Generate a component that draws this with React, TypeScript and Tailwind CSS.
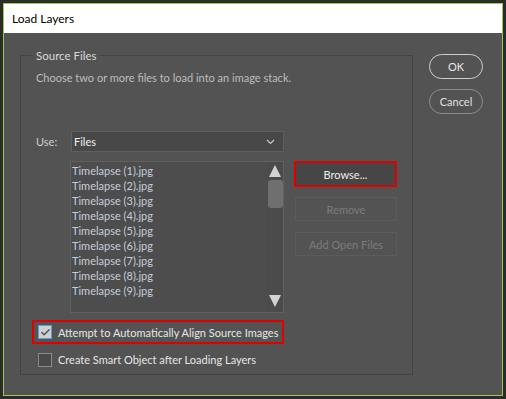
import { Check } from 'lucide-react';

const files = Array.from({ length: 9 }, (_, i) => `Timelapse (${i + 1}).jpg`);

export default function App() {
  return (
    <div
      className="w-[506px] h-[399px] bg-[#2b2b2b] p-[3px] text-[11px] leading-[15px]"
      style={{ fontFamily: 'Lato, "Noto Sans", sans-serif' }}
    >
      <div className="w-[500px] h-[393px] border border-[#9fc852] bg-[#535353] flex flex-col">
        {/* Title bar */}
        <div className="h-[29px] bg-white flex items-center pl-[8px] text-[12px] text-black shrink-0">
          Load Layers
        </div>

        {/* Body */}
        <div className="flex flex-1 pl-[16px] pt-[15px]">
          <fieldset className="w-[393px] h-[327px] border border-[#444444] pl-[15px]">
            <legend className="ml-[-3px] px-[3px] text-[#d8d8d8] text-[11.5px]">Source Files</legend>
            <p className="mt-[7px] text-[#bdbdbd]">Choose two or more files to load into an image stack.</p>

            {/* Use row */}
            <div className="flex items-center mt-[46px]">
              <span className="w-[35px] text-[#cfcfcf]">Use:</span>
              <div className="w-[213px] h-[21px] bg-[#484848] border border-[#5e5e5e] flex items-center justify-between pl-[2px] pr-[8px] text-[#f0f0f0]">
                <span>Files</span>
                <svg width="9" height="6" viewBox="0 0 9 6" fill="none" stroke="#c8c8c8" strokeWidth="1.2">
                  <path d="M1 1l3.5 3.5L8 1" />
                </svg>
              </div>
            </div>

            {/* List + buttons */}
            <div className="flex mt-[9px] ml-[34px]">
              <div className="w-[214px] h-[152px] border border-[#606060] bg-[#4d4d4d] flex">
                <div className="flex-1 pt-[1px] pl-[1px] overflow-hidden">
                  {files.map((f) => (
                    <div key={f} className="h-[15px] leading-[15px] text-[#c6cddc] whitespace-nowrap">
                      {f}
                    </div>
                  ))}
                </div>
                <div className="w-[16px] bg-[#4b4b4b] flex flex-col items-center">
                  <svg width="14" height="14" viewBox="0 0 14 14" className="mt-[2px]">
                    <path d="M7 1L13 13H1Z" fill="#d2d2d2" />
                  </svg>
                  <div className="w-[15px] h-[28px] mt-[2px] rounded-[3px] bg-[#6f6f6f]" />
                  <div className="flex-1" />
                  <svg width="14" height="14" viewBox="0 0 14 14" className="mb-[4px]">
                    <path d="M7 13L13 1H1Z" fill="#d2d2d2" />
                  </svg>
                </div>
              </div>

              <div className="flex flex-col ml-[10px] gap-[10px]">
                <div className="w-[103px] h-[26px] border-2 border-[#e00000] bg-[#464646] flex items-center justify-center text-[#ececec]">
                  Browse...
                </div>
                <div className="w-[102px] h-[24px] ml-[1px] border border-[#5c5c5c] flex items-center justify-center text-[#7c7c7c]">
                  Remove
                </div>
                <div className="w-[102px] h-[24px] ml-[1px] mt-[1px] border border-[#5c5c5c] flex items-center justify-center text-[#7c7c7c]">
                  Add Open Files
                </div>
              </div>
            </div>

            {/* Checkboxes */}
            <div className="mt-[7px] ml-[-4px] w-[252px] h-[24px] border-2 border-[#e00000] flex items-center pl-[4px]">
              <div className="w-[14px] h-[14px] border border-[#5b9be0] bg-[#cfcfcf] flex items-center justify-center shrink-0">
                <Check size={11} strokeWidth={3} color="#505050" />
              </div>
              <span className="ml-[6px] text-[#e6e6e6] whitespace-nowrap">Attempt to Automatically Align Source Images</span>
            </div>
            <div className="mt-[8px] flex items-center pl-[2px]">
              <div className="w-[14px] h-[14px] border border-[#8a8a8a] bg-[#4a4a4a] shrink-0" />
              <span className="ml-[6px] text-[#e6e6e6] whitespace-nowrap">Create Smart Object after Loading Layers</span>
            </div>
          </fieldset>

          {/* Right buttons */}
          <div className="flex flex-col ml-[16px] mt-[6px] gap-[10px]">
            <div className="w-[54px] h-[25px] rounded-full border-[1.5px] border-[#cfcfcf] flex items-center justify-center text-[#e8e8e8]">
              OK
            </div>
            <div className="w-[54px] h-[25px] rounded-full border-[1.5px] border-[#8c8c8c] flex items-center justify-center text-[#e0e0e0]">
              Cancel
            </div>
          </div>
        </div>
      </div>
    </div>
  );
}
